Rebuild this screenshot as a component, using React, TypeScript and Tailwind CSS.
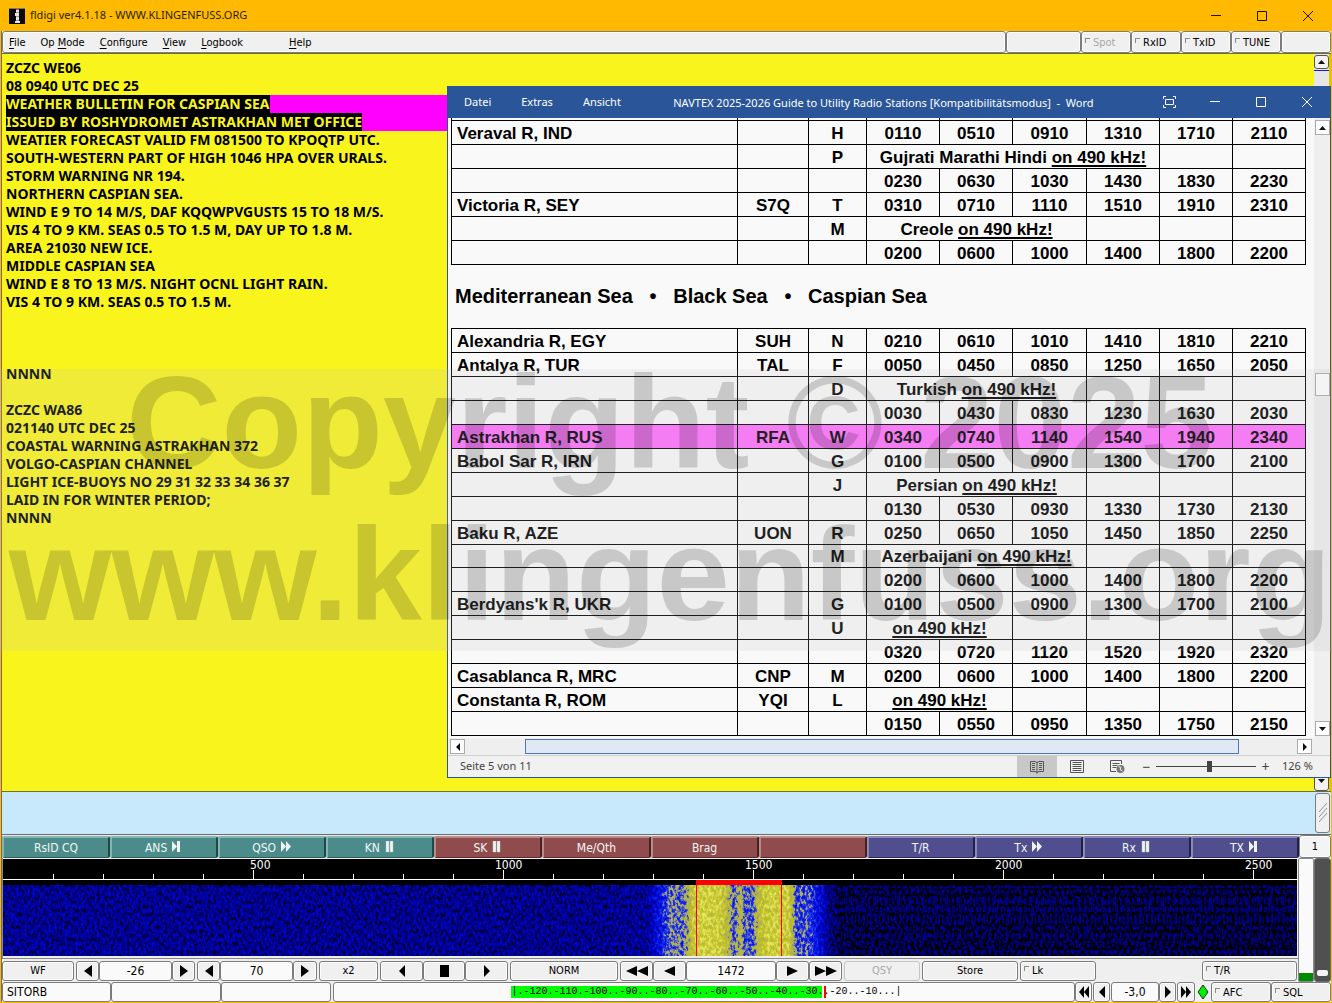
import React from "react";

const UI = "font-['DejaVu_Sans_Condensed','DejaVu_Sans',sans-serif]";
const SEGOE = "font-['Noto_Sans',sans-serif]";
const BOX =
  "flex items-center rounded-[3px] border border-[#7c7c7c] shadow-[inset_0_0_0_1px_#fdfdfd] text-[11px] leading-none text-black";

/* ---------- glyphs ---------- */

type GlyphName = "left" | "right" | "left2" | "right2" | "stop";

const GLYPHS: Record<GlyphName, { w: number; d: string }> = {
  left: { w: 8, d: "M8 0v12L0 6z" },
  right: { w: 8, d: "M0 0v12l8-6z" },
  left2: { w: 22, d: "M11 0v12L0 6zM22 0v12L11 6z" },
  right2: { w: 22, d: "M0 0v12l11-6zM11 0v12l11-6z" },
  stop: { w: 9, d: "M0 0h9v12H0z" },
};

function Glyph({ name, small, wide }: { name: GlyphName; small?: boolean; wide?: boolean }) {
  const g = GLYPHS[name];
  const width = small && g.w > 10 ? 10 : small ? 6 : wide ? 11 : g.w;
  const height = wide || (name.endsWith("2") && !small) ? 10 : 12;
  return (
    <svg width={width} height={height} viewBox={`0 0 ${g.w} 12`} preserveAspectRatio="none" aria-hidden="true">
      <path d={g.d} fill="#000" />
    </svg>
  );
}

type MacroIcon = "next" | "ff" | "pause";

function MacroGlyph({ icon }: { icon: MacroIcon }) {
  return (
    <svg width="12" height="12" viewBox="0 0 12 12" className="mb-[2px]" aria-hidden="true">
      {icon === "next" && <path d="M1 0v11l5-5.500zM6 0h3v11H6z" fill="#eef4f4" />}
      {icon === "ff" && <path d="M1 0v11l5-5.500zM6 0v11l5-5.500z" fill="#eef4f4" />}
      {icon === "pause" && <path d="M2 0h3v11H2zM6 0h3v11H6z" fill="#eef4f4" stroke="#b9c6c6" strokeWidth=".5" />}
    </svg>
  );
}

/* ---------- main window chrome ---------- */

function TitleBar() {
  return (
    <header className="flex h-[31px] shrink-0 items-center bg-[#ffb900] pr-px pl-[9px]">
      <svg width="16" height="16" viewBox="0 0 16 16" aria-hidden="true">
        <path d="M0 0h16v16H0z" fill="#0a0a0a" />
        <path d="M0 0h16v1H0z" fill="#777" />
        <path d="M7 2h3v2H7zM6 5h4v3H6zM7 9h3v3H7zM6 13h5v2H6z" fill="#e6e6e6" />
        <path d="M7 1h3v1H7z" fill="#e33" />
        <path d="M7 4h3v1H7zM7 8h3v1H7zM7 12h3v1H7z" fill="#9a9a9a" />
      </svg>
      <h1 className={`${SEGOE} ml-[5px] flex-1 text-[11px] text-[#2b1f00]`}>fldigi ver4.1.18 - WWW.KLINGENFUSS.ORG</h1>
      <WindowButtons color="#1c1400" />
    </header>
  );
}

function WindowButtons({ color }: { color: string }) {
  const items = [
    { label: "Minimize", d: "M1 5.500h10" },
    { label: "Maximize", d: "M1.500 1.500h9v9h-9z" },
    { label: "Close", d: "M1 1l10 10M11 1L1 11" },
  ];
  return (
    <div className="flex">
      {items.map((it) => (
        <button key={it.label} type="button" aria-label={it.label} className="flex h-[30px] w-[46px] items-center justify-center">
          <svg width="12" height="12" viewBox="0 0 12 12" fill="none" stroke={color} aria-hidden="true">
            <path d={it.d} />
          </svg>
        </button>
      ))}
    </div>
  );
}

function Hot({ text, at = 0 }: { text: string; at?: number }) {
  return (
    <>
      {text.slice(0, at)}
      <span className="underline underline-offset-2">{text[at]}</span>
      {text.slice(at + 1)}
    </>
  );
}

function Toggle({ label, className, disabled }: { label: string; className: string; disabled?: boolean }) {
  return (
    <label className={`${BOX} ${className} gap-[3px] bg-[#f0f0f0] pl-[3px]`}>
      <input
        type="checkbox"
        disabled={disabled}
        className="mb-[4px] size-[5px] appearance-none border-t border-l border-[#8a8a8a]"
      />
      <span className={disabled ? "text-[#a8a8a8]" : ""}>{label}</span>
    </label>
  );
}

function MenuBar() {
  const item = "mr-[15px] whitespace-nowrap";
  return (
    <nav className={`${UI} flex h-[22px] shrink-0 text-[11px] text-black`}>
      <div className={`${BOX} flex-1 bg-[#f0f0f0] pl-[6px]`}>
        <button type="button" className={item}><Hot text="File" /></button>
        <button type="button" className={item}><Hot text="Op Mode" at={3} /></button>
        <button type="button" className={item}><Hot text="Configure" /></button>
        <button type="button" className={item}><Hot text="View" /></button>
        <button type="button" className="mr-[46px]"><Hot text="Logbook" /></button>
        <button type="button"><Hot text="Help" /></button>
      </div>
      <div className={`${BOX} w-[75px] bg-[#f0f0f0]`} />
      <Toggle label="Spot" className="w-[50px]" disabled />
      <Toggle label="RxID" className="w-[50px]" />
      <Toggle label="TxID" className="w-[50px]" />
      <Toggle label="TUNE" className="w-[50px]" />
      <div className={`${BOX} w-[50px] bg-[#f0f0f0]`} />
    </nav>
  );
}

/* ---------- received text ---------- */

const RX_LINES = [
  "ZCZC WE06",
  "08 0940 UTC DEC 25",
  "*WEATHER BULLETIN FOR CASPIAN SEA",
  "*ISSUED BY ROSHYDROMET ASTRAKHAN MET OFFICE",
  "WEATIER FORECAST VALID FM 081500 TO KPOQTP UTC.",
  "SOUTH-WESTERN PART OF HIGH 1046 HPA OVER URALS.",
  "STORM WARNING NR 194.",
  "NORTHERN CASPIAN SEA.",
  "WIND E 9 TO 14 M/S, DAF KQQWPVGUSTS 15 TO 18 M/S.",
  "VIS 4 TO 9 KM. SEAS 0.5 TO 1.5 M, DAY UP TO 1.8 M.",
  "AREA 21030 NEW ICE.",
  "MIDDLE CASPIAN SEA",
  "WIND E 8 TO 13 M/S. NIGHT OCNL LIGHT RAIN.",
  "VIS 4 TO 9 KM. SEAS 0.5 TO 1.5 M.",
  "",
  "",
  "",
  "NNNN",
  "",
  "ZCZC WA86",
  "021140 UTC DEC 25",
  "COASTAL WARNING ASTRAKHAN 372",
  "VOLGO-CASPIAN CHANNEL",
  "LIGHT ICE-BUOYS NO 29 31 32 33 34 36 37",
  "LAID IN FOR WINTER PERIOD;",
  "NNNN",
];

function ScrollArrow({ down, className }: { down?: boolean; className: string }) {
  return (
    <button type="button" aria-label={down ? "Scroll down" : "Scroll up"} className={`flex items-center justify-center ${className}`}>
      <svg width="7" height="4" viewBox="0 0 7 4" aria-hidden="true">
        <path d={down ? "M0 0h7L3.500 4z" : "M0 4h7L3.500 0z"} fill="#111" />
      </svg>
    </button>
  );
}

function RxPane() {
  return (
    <section className="relative flex min-h-0 flex-1 border-y border-[#6f6f32] bg-[#f9f51c]" aria-label="Received text">
      <div className={`${SEGOE} min-w-0 flex-1 pt-[5px] pl-[4px] text-[14px] leading-[18px] font-bold text-black`}>
        {RX_LINES.map((line, i) =>
          line.startsWith("*") ? (
            <div key={i} className="flex h-[18px] bg-[#ff00ff] whitespace-nowrap">
              <span className="bg-black text-[#f9f51c]">{line.slice(1)}</span>
            </div>
          ) : (
            <div key={i} className="h-[18px] whitespace-nowrap">{line}</div>
          ),
        )}
      </div>
      <div className="flex w-[17px] flex-col justify-between border-r-2 border-[#d9c800] bg-[#e6e6e6]">
        <div className="border-b border-[#1020d0] pt-px pb-px">
          <ScrollArrow className="h-[14px] w-full rounded-[3px] border border-[#555] bg-[#f2f2f2]" />
        </div>
        <ScrollArrow down className="h-[17px] rounded-[3px] border border-[#555] bg-[#f2f2f2] pb-[3px]" />
      </div>
      <WordWindow />
    </section>
  );
}

/* ---------- Word window ---------- */

type Row = {
  name?: string;
  call?: string;
  id?: string;
  times?: string[];
  note?: { span: number; text: string };
  hot?: boolean;
  short?: boolean;
};

const T = (s: string) => s.split(" ");

const TABLE_A: Row[] = [
  { name: "Veraval R, IND", id: "H", times: T("0110 0510 0910 1310 1710 2110") },
  { id: "P", note: { span: 4, text: "Gujrati Marathi Hindi " } },
  { times: T("0230 0630 1030 1430 1830 2230") },
  { name: "Victoria R, SEY", call: "S7Q", id: "T", times: T("0310 0710 1110 1510 1910 2310") },
  { id: "M", note: { span: 3, text: "Creole " } },
  { times: T("0200 0600 1000 1400 1800 2200") },
];

const TABLE_B: Row[] = [
  { name: "Alexandria R, EGY", call: "SUH", id: "N", times: T("0210 0610 1010 1410 1810 2210") },
  { name: "Antalya R, TUR", call: "TAL", id: "F", times: T("0050 0450 0850 1250 1650 2050") },
  { id: "D", note: { span: 3, text: "Turkish " } },
  { times: T("0030 0430 0830 1230 1630 2030") },
  { name: "Astrakhan R, RUS", call: "RFA", id: "W", times: T("0340 0740 1140 1540 1940 2340"), hot: true },
  { name: "Babol Sar R, IRN", id: "G", times: T("0100 0500 0900 1300 1700 2100") },
  { id: "J", note: { span: 3, text: "Persian " } },
  { times: T("0130 0530 0930 1330 1730 2130") },
  { name: "Baku R, AZE", call: "UON", id: "R", times: T("0250 0650 1050 1450 1850 2250") },
  { id: "M", note: { span: 3, text: "Azerbaijani " }, short: true },
  { times: T("0200 0600 1000 1400 1800 2200") },
  { name: "Berdyans'k R, UKR", id: "G", times: T("0100 0500 0900 1300 1700 2100") },
  { id: "U", note: { span: 2, text: "" } },
  { times: T("0320 0720 1120 1520 1920 2320") },
  { name: "Casablanca R, MRC", call: "CNP", id: "M", times: T("0200 0600 1000 1400 1800 2200") },
  { name: "Constanta R, ROM", call: "YQI", id: "L", note: { span: 2, text: "" } },
  { times: T("0150 0550 0950 1350 1750 2150") },
];

function StationTable({ rows, continued, label }: { rows: Row[]; continued?: boolean; label: string }) {
  const edge = "border-r border-b border-black p-0 text-center";
  const cell = "border-r border-b border-black p-0 pt-[2px] text-center";
  return (
    <table
      aria-label={label}
      className={`w-full table-fixed border-separate border-spacing-0 border-l border-black text-[17px] leading-[20px] font-bold whitespace-nowrap ${continued ? "" : "border-t"}`}
    >
      <colgroup>
        <col />
        <col className="w-[71px]" />
        <col className="w-[58px]" />
        {[0, 1, 2, 3, 4, 5].map((i) => (
          <col key={i} className={i === 2 ? "w-[74px]" : "w-[73px]"} />
        ))}
      </colgroup>
      <tbody>
        {continued && (
          <tr className="h-[3px]">
            {[0, 1, 2, 3, 4, 5, 6, 7, 8].map((i) => (
              <td key={i} className={edge} />
            ))}
          </tr>
        )}
        {rows.map((r, i) => (
          <tr key={i} className={`${r.short ? "h-[23px]" : "h-[24px]"} ${r.hot ? "bg-[#ff70ff]" : ""}`}>
            <td className="border-r border-b border-black p-0 pt-[2px] pl-[5px]">{r.name}</td>
            <td className={cell}>{r.call}</td>
            <td className={cell}>{r.id}</td>
            {r.times?.map((t, j) => (
              <td key={j} className={cell}>{t}</td>
            ))}
            {r.note && (
              <>
                <td colSpan={r.note.span} className={cell}>
                  {r.note.text}
                  <span className="underline decoration-2 underline-offset-2">on 490 kHz!</span>
                </td>
                {Array.from({ length: 6 - r.note.span }, (_, j) => (
                  <td key={j} className={cell} />
                ))}
              </>
            )}
          </tr>
        ))}
      </tbody>
    </table>
  );
}

function WordWindow() {
  const arrow = "size-[15px] shrink-0 flex items-center justify-center border border-[#ababab] bg-white";
  return (
    <section
      aria-label="Word"
      className="absolute top-[32px] right-0 bottom-[13px] left-[445px] flex flex-col border border-t-0 border-[#2a5699] bg-[#f9f9f9]"
    >
      <header className={`${SEGOE} flex h-[32px] shrink-0 items-center bg-[#2a5699] text-[11px] text-white`}>
        <div className="flex gap-[30px] pl-[16px]">
          <button type="button">Datei</button>
          <button type="button">Extras</button>
          <button type="button">Ansicht</button>
        </div>
        <div className="flex-1 pt-[2px] text-center whitespace-pre">
          NAVTEX 2025-2026 Guide to Utility Radio Stations [Kompatibilitätsmodus]  -  Word
        </div>
        <button type="button" aria-label="Full screen" className="flex h-[30px] w-[46px] items-center justify-center">
          <svg width="13" height="12" viewBox="0 0 13 12" fill="none" stroke="#fff" aria-hidden="true">
            <path d="M.5 3V.5H3M10 .5h2.500V3M12.500 9v2.500H10M3 11.500H.5V9M2.500 3.500h8v5h-8z" />
          </svg>
        </button>
        <WindowButtons color="#ffffff" />
      </header>

      <div className="flex min-h-0 flex-1">
        <div className="min-w-0 flex-1 overflow-hidden pr-[8px] pl-[3px] font-['Liberation_Sans',Arial,sans-serif] text-black">
          <StationTable rows={TABLE_A} continued label="Indian Ocean stations" />
          <h2 className="pl-[4px] text-[20px] leading-[63px] font-bold whitespace-pre">
            {"Mediterranean Sea\u00a0\u00a0\u00a0•\u00a0\u00a0\u00a0Black Sea\u00a0\u00a0\u00a0•\u00a0\u00a0\u00a0Caspian Sea"}
          </h2>
          <StationTable rows={TABLE_B} label="Mediterranean Sea, Black Sea, Caspian Sea stations" />
        </div>
        <div className="flex w-[16px] shrink-0 flex-col items-center bg-[#efefef] pt-[2px] pb-[2px]">
          <ScrollArrow className={arrow} />
          <div className="flex-[238]" />
          <div className="h-[23px] w-[15px] border border-[#ababab] bg-white" />
          <div className="flex-[324]" />
          <ScrollArrow down className={arrow} />
        </div>
      </div>

      <div className="flex h-[18px] shrink-0 items-center border-b border-[#d0d0d0] bg-[#efefef] pr-[18px] pl-[2px]">
        <button type="button" aria-label="Scroll left" className={arrow}>
          <svg width="4" height="8" viewBox="0 0 4 8" aria-hidden="true"><path d="M4 0v8L0 4z" fill="#111" /></svg>
        </button>
        <div className="flex-[60]" />
        <div className="h-[15px] flex-[714] border border-[#4a7ab8] bg-[#dfe9f6]" />
        <div className="flex-[58]" />
        <button type="button" aria-label="Scroll right" className={arrow}>
          <svg width="4" height="8" viewBox="0 0 4 8" aria-hidden="true"><path d="M0 0v8l4-4z" fill="#111" /></svg>
        </button>
      </div>

      <footer className={`${SEGOE} flex h-[21px] shrink-0 items-center bg-[#f1f1f1] pr-[16px] pl-[12px] text-[11px] text-[#444]`}>
        <span className="flex-1">Seite 5 von 11</span>
        <button type="button" aria-label="Read mode" className="flex h-full w-[40px] items-center justify-center bg-[#c8c8c8]">
          <svg width="14" height="14" viewBox="0 0 14 14" fill="none" stroke="#555" aria-hidden="true">
            <path d="M.5 1.500H5l2 1 2-1h4.500v10H9l-2 1-2-1H.5zM7 2.500v11M2 3.500h3M2 5.500h3M2 7.500h3M2 9.500h3M9 3.500h3M9 5.500h3M9 7.500h3M9 9.500h3" />
          </svg>
        </button>
        <button type="button" aria-label="Print layout" className="flex h-full w-[40px] items-center justify-center">
          <svg width="14" height="13" viewBox="0 0 14 13" fill="none" stroke="#555" aria-hidden="true">
            <path d="M.5.5h13v12H.5zM2.500 2.500h9M2.500 4.500h9M2.500 6.500h9M2.500 8.500h9M2.500 10.500h9" />
          </svg>
        </button>
        <button type="button" aria-label="Web layout" className="flex h-full w-[40px] items-center justify-center">
          <svg width="15" height="14" viewBox="0 0 15 14" fill="none" stroke="#555" aria-hidden="true">
            <path d="M6 11.500H.5V.5h11V4M2.500 3.500h7M2.500 5.500h5M2.500 7.500h4" />
            <circle cx="10.500" cy="9" r="4" fill="#777" stroke="none" />
            <path d="M8.500 6.500l2.500 1-1 2 2.500 1.500" stroke="#f1f1f1" />
          </svg>
        </button>
        <span className="ml-[5px] w-[9px] text-center text-[14px] leading-none">−</span>
        <input
          type="range"
          aria-label="Zoom"
          defaultValue={54}
          className="mx-[5px] h-[12px] w-[100px] appearance-none bg-[linear-gradient(#444,#444)] bg-[length:100%_1px] bg-center bg-no-repeat [&::-webkit-slider-thumb]:h-[11px] [&::-webkit-slider-thumb]:w-[5px] [&::-webkit-slider-thumb]:appearance-none [&::-webkit-slider-thumb]:bg-[#444]"
        />
        <span className="w-[9px] text-center text-[14px] leading-none">+</span>
        <span className="ml-[12px] w-[32px] whitespace-nowrap">126 %</span>
      </footer>
    </section>
  );
}

/* ---------- transmit pane and macros ---------- */

function TxPane() {
  return (
    <section className="flex h-[43px] shrink-0 border-b border-[#6c6c6c] bg-[#c8e8fc]">
      <textarea aria-label="Transmit text" className="min-w-0 flex-1 resize-none bg-[#c8e8fc]" />
      <div className="mt-px mr-px flex h-[40px] w-[15px] items-center justify-center rounded-[3px] border border-[#7c7c7c] bg-[#f0f0f0]">
        <svg width="8" height="20" viewBox="0 0 8 20" fill="none" stroke="#909090" aria-hidden="true">
          <path d="M0 9l8-9M0 14l8-9M0 19l8-9" />
        </svg>
      </div>
    </section>
  );
}

const TEAL = "bg-[#4b8c8a] border-t-[#86b4b2] border-l-[#86b4b2] border-r-[#1f4a48] border-b-[#2c5c5a]";
const RED = "bg-[#904c4c] border-t-[#b88a8a] border-l-[#b88a8a] border-r-[#4a2020] border-b-[#5c2c2c]";
const BLUE = "bg-[#504e8e] border-t-[#8a8ab4] border-l-[#8a8ab4] border-r-[#20204a] border-b-[#2c2c5c]";

const MACROS: { label: string; icon?: MacroIcon; tone: string }[] = [
  { label: "RsID CQ", tone: TEAL },
  { label: "ANS", icon: "next", tone: TEAL },
  { label: "QSO", icon: "ff", tone: TEAL },
  { label: "KN", icon: "pause", tone: TEAL },
  { label: "SK", icon: "pause", tone: RED },
  { label: "Me/Qth", tone: RED },
  { label: "Brag", tone: RED },
  { label: "", tone: RED },
  { label: "T/R", tone: BLUE },
  { label: "Tx", icon: "ff", tone: BLUE },
  { label: "Rx", icon: "pause", tone: BLUE },
  { label: "TX", icon: "next", tone: BLUE },
];

function MacroBar() {
  return (
    <div className={`${UI} flex h-[23px] shrink-0 bg-[#e8e8e8] text-[12px]`}>
      <div className="grid flex-1 grid-cols-12">
        {MACROS.map((m, i) => (
          <button
            key={i}
            type="button"
            aria-label={m.label || "Empty macro"}
            className={`mt-px flex items-center justify-center gap-[4px] rounded-[2px] border-x-2 border-t-2 border-b text-[#f2f6f6] ${m.tone}`}
          >
            {m.label}
            {m.icon && <MacroGlyph icon={m.icon} />}
          </button>
        ))}
      </div>
      <button type="button" className={`${BOX} w-[32px] justify-center bg-[#f4f4f4]`}>1</button>
    </div>
  );
}

/* ---------- waterfall ---------- */

const PROFILE: [number, number][] = [
  [0, 0.19],
  [600, 0.18],
  [645, 0.2],
  [652, 0.32],
  [660, 0.44],
  [668, 0.56],
  [680, 0.53],
  [684, 0.6],
  [690, 0.8],
  [700, 0.84],
  [718, 0.82],
  [726, 0.66],
  [731, 0.5],
  [737, 0.68],
  [742, 0.52],
  [750, 0.52],
  [756, 0.72],
  [764, 0.82],
  [786, 0.82],
  [793, 0.5],
  [806, 0.5],
  [816, 0.36],
  [826, 0.17],
  [840, 0.06],
  [1600, 0.03],
];

function Waterfall() {
  const ticks = Array.from({ length: 40 }, (_, i) => (i + 1) * 100);
  return (
    <svg width="100%" height="97" className="block bg-black" role="img" aria-label="Waterfall">
      <defs>
        <linearGradient id="profile" gradientUnits="userSpaceOnUse" x1="0" y1="0" x2="1600" y2="0">
          {PROFILE.map(([x, v]) => (
            <stop key={x} offset={x / 1600} stopColor={`rgb(${Math.round(v * 255)},${Math.round(v * 255)},${Math.round(v * 255)})`} />
          ))}
        </linearGradient>
        <filter id="noise" x="0" y="0" width="100%" height="100%" colorInterpolationFilters="sRGB">
          <feTurbulence type="fractalNoise" baseFrequency="0.370 0.240" numOctaves="3" seed="7" />
          <feColorMatrix values="2.200 0 0 0 -0.600  2.200 0 0 0 -0.600  2.200 0 0 0 -0.600  0 0 0 0 1" result="n" />
          <feComposite in="SourceGraphic" in2="n" operator="arithmetic" k1="0" k2="1" k3="0.260" k4="-0.130" />
          <feComponentTransfer>
            <feFuncR type="table" tableValues="0 0 0 0 0 0.150 0.680 0.720 0.780 0.880 0.920" />
            <feFuncG type="table" tableValues="0 0 0 0.020 0.080 0.220 0.680 0.720 0.780 0.880 0.920" />
            <feFuncB type="table" tableValues="0 0.320 0.620 0.760 0.920 0.900 0.400 0.200 0.180 0.350 0.420" />
          </feComponentTransfer>
        </filter>
        <pattern id="ripple" width="12" height="71" patternUnits="userSpaceOnUse" y="26">
          <path
            d="M0 1h4v2H0zM6 1h4v2H6zM2 5h3v3H2zM8 5h2v4H8zM1 13h2v6H1zM6 12h3v8H6zM10 14h1v4h-1zM1 22h3v5H1zM5 23h2v3H5zM8 22h3v5H8zM3 30h2v8H3zM8 29h2v10H8zM0 31h1v8H0zM2 42h3v3H2zM6 42h2v3H6zM1 48h2v5H1zM4 49h1v3H4zM7 48h3v6H7zM0 56h2v4H0zM4 56h4v2H4zM5 59h2v3H5zM1 65h3v4H1zM7 65h3v4H7z"
            fill="#0000a0"
            opacity=".65"
          />
        </pattern>
      </defs>
      <rect x="0" y="26" width="100%" height="71" fill="url(#profile)" filter="url(#noise)" />
      <rect x="840" y="26" width="100%" height="71" fill="url(#ripple)" />
      <rect x="0" y="20" width="100%" height="1" fill="#fff" />
      {ticks.map((f) => (
        <rect key={f} x={f / 2} y={f % 500 ? 15 : 11} width="1" height={f % 500 ? 5 : 9} fill="#fff" />
      ))}
      {[500, 1000, 1500, 2000, 2500].map((f) => (
        <text key={f} x={f / 2 + (f < 1000 ? -3 : -8)} y="10" fill="#fff" fontSize="12" fontFamily="DejaVu Sans Condensed, DejaVu Sans, sans-serif">
          {f}
        </text>
      ))}
      <rect x="693" y="21" width="86" height="5" fill="#f00" />
      <rect x="693" y="21" width="1" height="76" fill="#f00" />
      <rect x="778" y="21" width="1" height="76" fill="#f00" />
    </svg>
  );
}

function Btn({ className, label, children }: { className: string; label?: string; children: React.ReactNode }) {
  return (
    <button type="button" aria-label={label} className={`${BOX} h-[20px] justify-center bg-[#f0f0f0] ${className}`}>
      {children}
    </button>
  );
}

function Field({ className, value, label, left }: { className: string; value: string; label: string; left?: boolean }) {
  return (
    <input
      aria-label={label}
      defaultValue={value}
      className={`h-[20px] rounded-[3px] border border-[#7c7c7c] bg-[#fafafa] text-[12px] text-black ${left ? "px-[4px]" : "text-center"} ${className}`}
    />
  );
}

function Controls() {
  return (
    <div className={`${UI} flex h-[23px] items-center gap-[2px] pr-px`}>
      <Btn className="w-[72px]">WF</Btn>
      <div className="flex">
        <Btn className="w-[23px]" label="Lower reference"><Glyph name="left" /></Btn>
        <Field className="w-[73px]" value="-26" label="Reference level" />
        <Btn className="w-[23px]" label="Raise reference"><Glyph name="right" /></Btn>
      </div>
      <div className="flex">
        <Btn className="w-[23px]" label="Less range"><Glyph name="left" /></Btn>
        <Field className="w-[73px]" value="70" label="Range" />
        <Btn className="w-[24px]" label="More range"><Glyph name="right" /></Btn>
      </div>
      <Btn className="w-[59px]">x2</Btn>
      <div className="flex">
        <Btn className="w-[43px]" label="Scroll left"><Glyph name="left" small /></Btn>
        <Btn className="w-[42px]" label="Center"><Glyph name="stop" /></Btn>
        <Btn className="w-[43px]" label="Scroll right"><Glyph name="right" small /></Btn>
      </div>
      <Btn className="w-[108px]">NORM</Btn>
      <div className="flex">
        <Btn className="w-[33px]" label="Much lower"><Glyph name="left2" /></Btn>
        <Btn className="w-[33px]" label="Lower"><Glyph name="left" wide /></Btn>
        <Field className="w-[90px]" value="1472" label="Audio frequency" />
        <Btn className="w-[33px]" label="Higher"><Glyph name="right" wide /></Btn>
        <Btn className="w-[33px]" label="Much higher"><Glyph name="right2" /></Btn>
      </div>
      <button type="button" disabled className="flex h-[20px] w-[76px] items-center justify-center rounded-[3px] border border-[#c4c4c4] bg-[#f0f0f0] text-[11px] leading-none text-[#a8a8a8]">
        QSY
      </button>
      <Btn className="w-[96px]">Store</Btn>
      <Toggle label="Lk" className="h-[20px] w-[76px]" />
      <Toggle label="T/R" className="ml-auto h-[20px] w-[95px]" />
    </div>
  );
}

function StatusBar() {
  return (
    <footer className={`${UI} flex h-[20px] shrink-0 bg-[#efefef]`}>
      <Field className="w-[109px]" value="SITORB" label="Mode" left />
      <Field className="w-[110px]" value="" label="Status 1" />
      <Field className="w-[110px]" value="" label="Status 2" />
      <div className={`${BOX} ml-[2px] h-[20px] flex-1 justify-center bg-[#fafafa] pl-[5px]`}>
        <div className="bg-[linear-gradient(90deg,#00ff00_311px,transparent_311px,transparent_313px,#f00_313px,#f00_315px,transparent_315px)] font-['Liberation_Mono',monospace] text-[10px] leading-[12px] whitespace-pre">
          |.-120.-110.-100..-90..-80..-70..-60..-50..-40..-30..-20..-10...|
        </div>
      </div>
      <Btn className="w-[17px]" label="Squelch down fast"><Glyph name="left2" small /></Btn>
      <Btn className="ml-px w-[17px]" label="Squelch down"><Glyph name="left" small /></Btn>
      <Field className="ml-px w-[48px]" value="-3,0" label="Attenuation" />
      <Btn className="w-[17px]" label="Squelch up"><Glyph name="right" small /></Btn>
      <Btn className="ml-px w-[18px]" label="Squelch up fast"><Glyph name="right2" small /></Btn>
      <svg width="16" height="20" viewBox="0 0 16 20" aria-hidden="true">
        <path d="M8 3l5 7-5 7-5-7z" fill="#00f000" stroke="#153015" />
      </svg>
      <Toggle label="AFC" className="h-[20px] w-[60px]" />
      <Toggle label="SQL" className="h-[20px] w-[60px]" />
    </footer>
  );
}

function Watermark() {
  return (
    <div
      aria-hidden="true"
      className="pointer-events-none absolute top-[369px] right-0 left-0 flex h-[282px] flex-col items-center justify-end bg-[#c0c0c0]/17 pl-[8px] font-['Liberation_Sans',Arial,sans-serif] text-[132px] leading-[152px] font-bold whitespace-nowrap text-black/16"
    >
      <div>Copyright © 2025</div>
      <div>www.klingenfuss.org</div>
    </div>
  );
}

export default function App() {
  return (
    <main className="relative flex h-screen min-h-[700px] flex-col overflow-hidden bg-[#ffb900]">
      <TitleBar />
      <div className="mr-px ml-px flex min-h-0 flex-1 flex-col border-l border-[#6c6c6c] bg-[#efefef]">
        <MenuBar />
        <RxPane />
        <TxPane />
        <MacroBar />
        <div className="flex shrink-0">
          <div className="min-w-0 flex-1">
            <div className="border-b border-l border-[#8a8a8a] bg-[#efefef] pt-px pr-px pb-[2px]">
              <Waterfall />
            </div>
            <Controls />
          </div>
          <div className="flex w-[16px] flex-col justify-end rounded-[2px] border border-[#8a8a8a] bg-[#fafafa]">
            <div className="h-[8px] bg-[#008a00]" />
          </div>
          <input
            type="range"
            aria-label="Transmit level"
            defaultValue={4}
            className="h-[124px] w-[17px] appearance-none rounded-[3px] border border-[#6c6c6c] bg-[#505050] [direction:rtl] [writing-mode:vertical-lr] [&::-webkit-slider-thumb]:h-[6px] [&::-webkit-slider-thumb]:w-[11px] [&::-webkit-slider-thumb]:appearance-none [&::-webkit-slider-thumb]:rounded-[2px] [&::-webkit-slider-thumb]:bg-[#f4f4f4]"
          />
        </div>
        <StatusBar />
      </div>
      <div className="h-px shrink-0 bg-[#ffb900]" />
      <Watermark />
    </main>
  );
}
